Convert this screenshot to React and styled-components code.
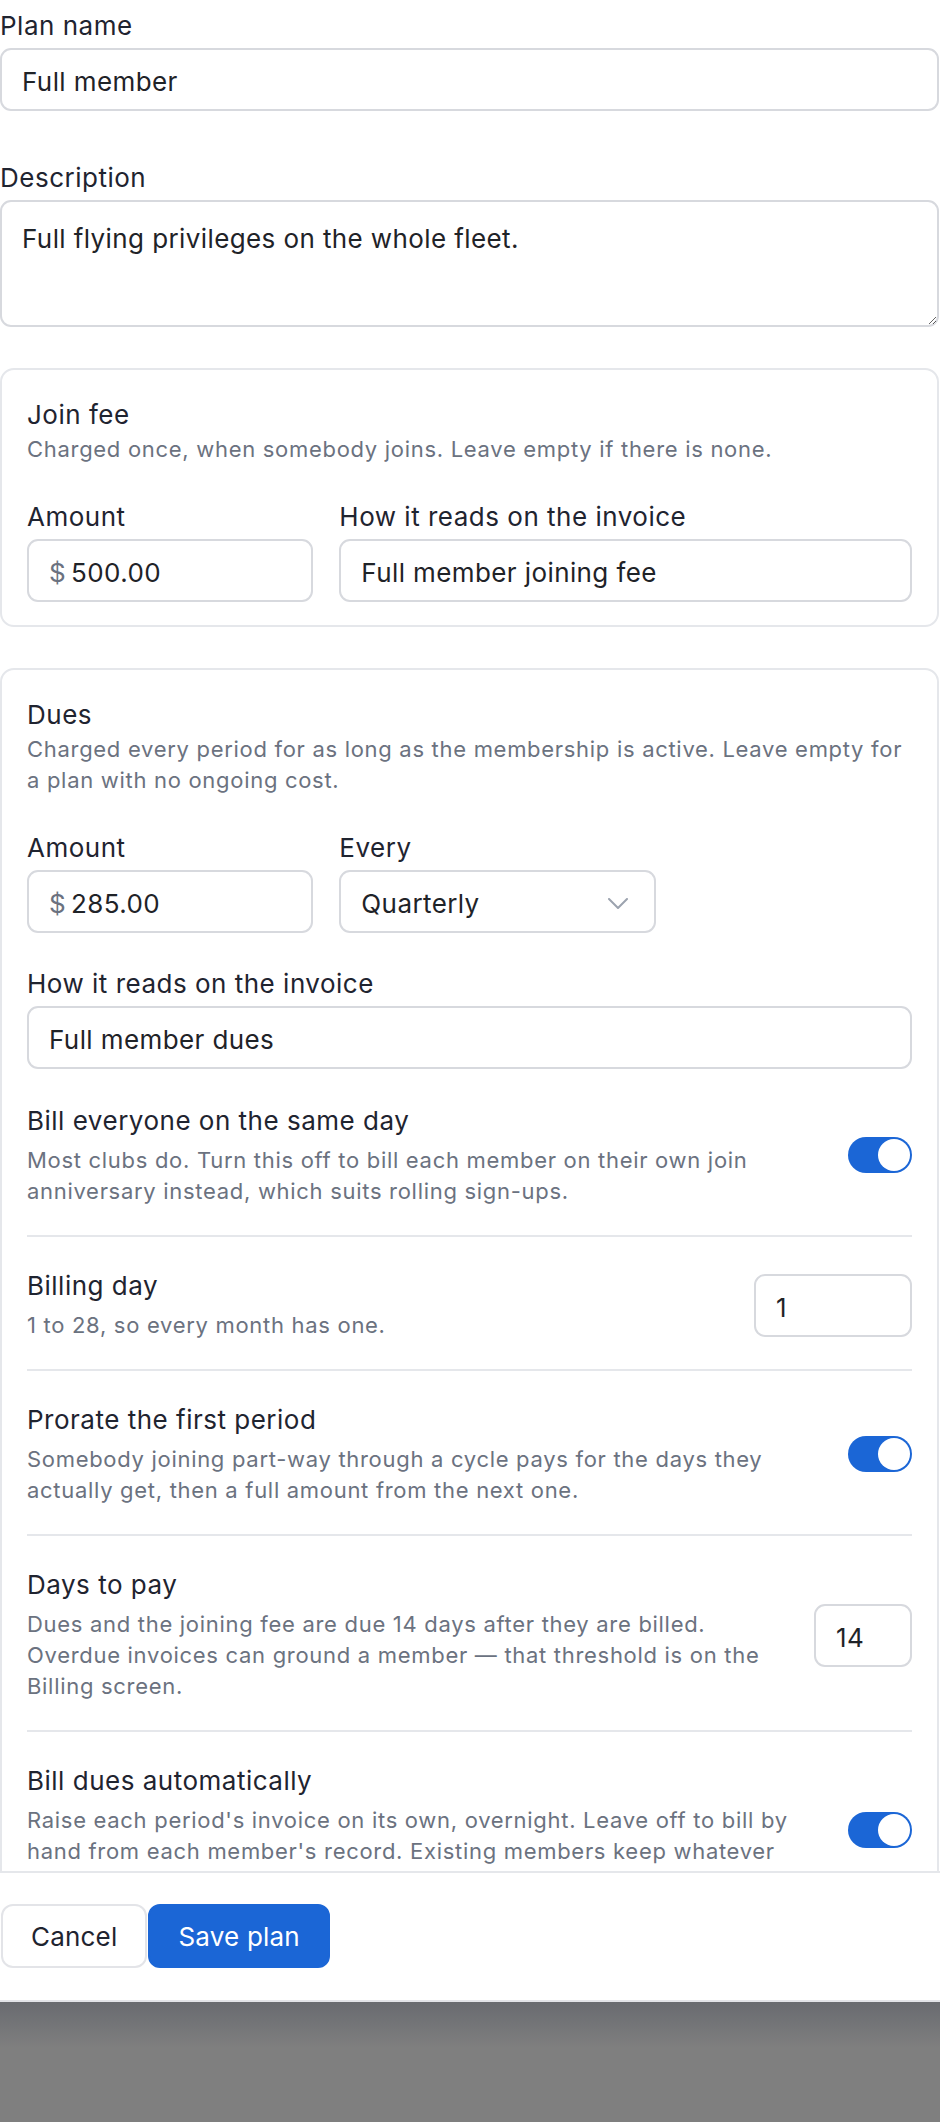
import styled, { createGlobalStyle } from "styled-components";

const GlobalStyle = createGlobalStyle`
  * {
    box-sizing: border-box;
  }

  html,
  body {
    margin: 0;
    padding: 0;
  }

  body {
    font-family: Inter, "Noto Sans", sans-serif;
    color: #1f2430;
    background: #7f7f7f;
  }
`;

const Screen = styled.div`
  display: flex;
  flex-direction: column;
  height: 2122px;
  overflow: hidden;
`;

const Dialog = styled.div`
  display: flex;
  flex-direction: column;
  height: 2002px;
  background: #fff;
  border-bottom: 2px solid #e3e4e8;
`;

const Body = styled.div`
  flex: 1;
  min-height: 0;
  overflow: hidden;
  padding: 10px 1px 0 0;
`;

const Footer = styled.div`
  display: flex;
  gap: 1px;
  padding: 31px 0 32px 1px;
  border-top: 2px solid #e5e7eb;
`;

const Backdrop = styled.div`
  flex: 1;
  background: linear-gradient(#696b70, #7f7f7f 46px);
`;

const Field = styled.div`
  margin-top: ${(p) => p.$top || 0}px;
  margin-bottom: ${(p) => p.$space || 0}px;
`;

const Label = styled.label`
  display: block;
  font-size: 26px;
  line-height: 32px;
  letter-spacing: 0.5px;
  font-weight: 400;
  color: #1f2430;
  margin-bottom: 6px;
`;

const fieldText = `
  font-family: Inter, "Noto Sans", sans-serif;
  font-size: 26px;
  letter-spacing: 0.4px;
  color: #1f2328;
`;

const Input = styled.input`
  ${fieldText}
  display: block;
  width: ${(p) => (p.$width ? `${p.$width}px` : "100%")};
  height: 63px;
  padding: 4px 20px 0;
  border: 2px solid #d7d9de;
  border-radius: 11px;
  background: #fff;
  outline: none;
`;

const TextArea = styled.textarea`
  ${fieldText}
  display: block;
  width: 100%;
  height: 127px;
  padding: 18px 20px 16px;
  border: 2px solid #d7d9de;
  border-radius: 11px;
  line-height: 37px;
  outline: none;
`;

const MoneyBox = styled.div`
  ${fieldText}
  display: flex;
  align-items: center;
  gap: 5px;
  height: 63px;
  padding: 4px 20px 0;
  border: 2px solid #d7d9de;
  border-radius: 11px;
`;

const Currency = styled.span`
  color: #6b7280;
`;

const SelectBox = styled.div`
  ${fieldText}
  display: flex;
  align-items: center;
  justify-content: space-between;
  width: ${(p) => p.$width}px;
  height: 63px;
  padding: 4px 26px 0 20px;
  border: 2px solid #d7d9de;
  border-radius: 11px;
`;

const Card = styled.section`
  border: 2px solid #e5e7eb;
  border-radius: 14px;
  padding: 29px 25px 23px;
  margin-bottom: 41px;
`;

const Title = styled.h3`
  margin: 0;
  font-size: 26px;
  line-height: 32px;
  letter-spacing: 0.5px;
  font-weight: 400;
  color: #1f2430;
`;

const Hint = styled.p`
  margin: ${(p) => p.$gap || 3}px 0 0;
  max-width: ${(p) => p.$max || "none"};
  font-size: 22px;
  line-height: 31px;
  letter-spacing: 0.7px;
  color: #6b7280;
`;

const Grid = styled.div`
  display: grid;
  grid-template-columns: ${(p) => p.$cols};
  column-gap: 26px;
  margin-top: ${(p) => p.$top || 0}px;
`;

const SettingList = styled.div`
  margin-top: 3px;
`;

const Setting = styled.div`
  display: flex;
  align-items: center;
  gap: 32px;
  padding: 33px 0 28px;

  & + & {
    border-top: 2px solid #e5e7eb;
  }
`;

const SettingText = styled.div`
  flex: 1;
  min-width: 0;
`;

const Switch = styled.span`
  flex: none;
  display: flex;
  justify-content: ${(p) => (p.$on ? "flex-end" : "flex-start")};
  width: 64px;
  height: 36px;
  padding: 2px;
  border-radius: 18px;
  background: ${(p) => (p.$on ? "#1b66d6" : "#d1d5db")};
  margin-top: -3px;

  &::after {
    content: "";
    width: 32px;
    height: 32px;
    border-radius: 50%;
    background: #fff;
  }
`;

const Button = styled.button`
  height: 64px;
  padding: 0 28px;
  border-radius: 12px;
  font-family: Inter, "Noto Sans", sans-serif;
  font-size: 26px;
  letter-spacing: 0.2px;
  border: 2px solid ${(p) => (p.$primary ? "#1b66d6" : "#e3e4e8")};
  background: ${(p) => (p.$primary ? "#1b66d6" : "#fff")};
  color: ${(p) => (p.$primary ? "#fff" : "#1f2430")};
`;

function Chevron() {
  return (
    <svg width="20" height="11" viewBox="0 0 20 11" fill="none">
      <path
        d="M1 1l9 9 9-9"
        stroke="#9ca3af"
        strokeWidth="2"
        strokeLinecap="round"
        strokeLinejoin="round"
      />
    </svg>
  );
}

const settings = [
  {
    title: "Bill everyone on the same day",
    hint: "Most clubs do. Turn this off to bill each member on their own join anniversary instead, which suits rolling sign-ups.",
    toggle: true,
  },
  {
    title: "Billing day",
    hint: "1 to 28, so every month has one.",
    value: "1",
    width: 158,
  },
  {
    title: "Prorate the first period",
    hint: "Somebody joining part-way through a cycle pays for the days they actually get, then a full amount from the next one.",
    toggle: true,
  },
  {
    title: "Days to pay",
    hint: "Dues and the joining fee are due 14 days after they are billed. Overdue invoices can ground a member — that threshold is on the Billing screen.",
    value: "14",
    width: 98,
  },
  {
    title: "Bill dues automatically",
    hint: "Raise each period's invoice on its own, overnight. Leave off to bill by hand from each member's record. Existing members keep whatever setting they already have.",
    toggle: true,
  },
];

export default function App() {
  return (
    <>
      <GlobalStyle />
      <Screen>
        <Dialog>
          <Body>
            <Field $space={51}>
              <Label>Plan name</Label>
              <Input defaultValue="Full member" />
            </Field>
            <Field $space={41}>
              <Label>Description</Label>
              <TextArea defaultValue="Full flying privileges on the whole fleet." />
            </Field>

            <Card>
              <Title>Join fee</Title>
              <Hint>Charged once, when somebody joins. Leave empty if there is none.</Hint>
              <Grid $cols="1fr 2fr" $top={36}>
                <div>
                  <Label>Amount</Label>
                  <MoneyBox>
                    <Currency>$</Currency>500.00
                  </MoneyBox>
                </div>
                <div>
                  <Label>How it reads on the invoice</Label>
                  <Input defaultValue="Full member joining fee" />
                </div>
              </Grid>
            </Card>

            <Card>
              <Title>Dues</Title>
              <Hint $max="880px">
                Charged every period for as long as the membership is active. Leave empty for a plan
                with no ongoing cost.
              </Hint>
              <Grid $cols="1fr 2fr" $top={36}>
                <div>
                  <Label>Amount</Label>
                  <MoneyBox>
                    <Currency>$</Currency>285.00
                  </MoneyBox>
                </div>
                <div>
                  <Label>Every</Label>
                  <SelectBox $width={317}>
                    Quarterly
                    <Chevron />
                  </SelectBox>
                </div>
              </Grid>
              <Field $top={35}>
                <Label>How it reads on the invoice</Label>
                <Input defaultValue="Full member dues" />
              </Field>

              <SettingList>
                {settings.map((s) => (
                  <Setting key={s.title}>
                    <SettingText>
                      <Title>{s.title}</Title>
                      <Hint $gap={8}>{s.hint}</Hint>
                    </SettingText>
                    {s.toggle ? (
                      <Switch $on />
                    ) : (
                      <Input $width={s.width} defaultValue={s.value} />
                    )}
                  </Setting>
                ))}
              </SettingList>
            </Card>
          </Body>
          <Footer>
            <Button>Cancel</Button>
            <Button $primary>Save plan</Button>
          </Footer>
        </Dialog>
        <Backdrop />
      </Screen>
    </>
  );
}
